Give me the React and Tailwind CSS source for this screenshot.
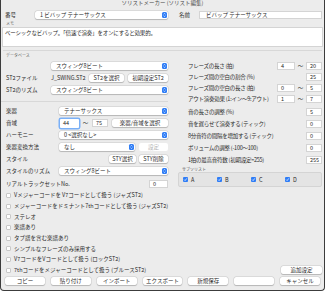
import React from "react";

const Stepper = () => (
  <span className="flex h-[6px] w-[5px] shrink-0 items-center justify-center rounded-[1.5px] bg-[#2f7df6]">
    <svg viewBox="0 0 5 6" className="h-[6px] w-[5px]">
      <path d="M1.5 2.4 L2.5 1.4 L3.5 2.4 M1.5 3.6 L2.5 4.6 L3.5 3.6" stroke="white" strokeWidth="0.6" fill="none" />
    </svg>
  </span>
);

const Popup = ({ text, className = "" }) => (
  <div className={`flex h-[8px] items-center justify-between rounded-[2px] bg-white pl-[5px] pr-[1px] shadow-[0_0_0_0.5px_rgba(0,0,0,0.12),0_0.5px_1px_rgba(0,0,0,0.18)] ${className}`}>
    <span>{text}</span>
    <Stepper />
  </div>
);

const Field = ({ text, className = "" }) => (
  <div className={`flex h-[8px] items-center border-[0.5px] border-[#d4d4d4] bg-white px-[3px] ${className}`}>{text}</div>
);

const Btn = ({ text, className = "" }) => (
  <div className={`flex h-[8px] items-center justify-center rounded-[2px] bg-white shadow-[0_0_0_0.5px_rgba(0,0,0,0.12),0_0.5px_1px_rgba(0,0,0,0.18)] ${className}`}>{text}</div>
);

const Label = ({ text, className = "" }) => <span className={`w-[45px] shrink-0 ${className}`}>{text}</span>;

const Check = ({ text }) => (
  <div className="flex h-[10.7px] items-center gap-[3px] pl-[5px]">
    <span className="h-[5px] w-[5px] rounded-[1px] border-[0.5px] border-[#c8c8c8] bg-white" />
    <span>{text}</span>
  </div>
);

const BlueCheck = ({ text }) => (
  <div className="flex w-[34px] items-center gap-[3px]">
    <span className="flex h-[5px] w-[5px] items-center justify-center rounded-[1px] bg-[#2f7df6]">
      <svg viewBox="0 0 5 5" className="h-[5px] w-[5px]">
        <path d="M1.1 2.6 L2.1 3.6 L3.9 1.3" stroke="white" strokeWidth="0.7" fill="none" />
      </svg>
    </span>
    <span>{text}</span>
  </div>
);

const RightRow = ({ label, a, b }) => (
  <div className="flex h-[8px] items-center">
    <span className="flex-1 whitespace-nowrap tracking-[-0.25px]">{label}</span>
    {b !== undefined ? (
      <>
        <Field text={a} className="w-[18px]" />
        <span className="w-[11px] text-center">〜</span>
      </>
    ) : null}
    <Field text={b !== undefined ? b : a} className="w-[16px]" />
  </div>
);

export default function App() {
  return (
    <div className="flex h-[291px] w-[325px] flex-col overflow-hidden rounded-b-[4px] border-x border-b border-[#3c3c3c] bg-[#ececec] text-[5.5px] leading-[8px] text-[#2a2a2a]" style={{ fontFamily: '"Noto Sans CJK JP", "Noto Sans", sans-serif' }}>
      <div className="h-[10px] text-center leading-[7px] text-[#4a4a4a]">ソリストメーカー (ソリスト編集)</div>

      <div className="flex h-[9px] items-center pr-[2px]">
        <span className="w-[34px] shrink-0 pl-[4px]">番号</span>
        <Popup text="1 ビバップ テナーサックス" className="w-[133px]" />
        <span className="ml-[11px] w-[20px] shrink-0">名前</span>
        <Field text="ビバップ テナーサックス" className="flex-1 pl-[6px]" />
      </div>

      <div className="h-[8px] pl-[5px] pt-[1px] text-[4px] leading-[6px] text-[#555]">メモ</div>
      <div className="mx-[1px] h-[20px] border-[0.5px] border-[#d4d4d4] bg-white pl-[2px] pt-[1px] tracking-[-0.2px]">
        ベーシックなビバップ。「倍速で演奏」をオンにすると効果的。
      </div>

      <div className="mx-[2px] mt-[3px] border-t border-[#d8d8d8]" />
      <div className="h-[9px] pl-[5px] pt-[1px] text-[4px] leading-[6px] text-[#555]">データベース</div>

      <div className="flex">
        <div className="flex w-[167px] shrink-0 flex-col pl-[5px]">
          <div className="flex h-[12px] items-center">
            <Label text="" />
            <Popup text="スウィング8ビート" className="flex-1" />
          </div>
          <div className="flex h-[12px] items-center">
            <Label text="ST2ファイル" />
            <span className="w-[38px]">J_SWING.ST2</span>
            <Btn text="ST2を選択" className="w-[35px]" />
            <Btn text="初期設定ST2" className="ml-[4px] flex-1" />
          </div>
          <div className="flex h-[12px] items-center">
            <Label text="ST2のリズム" />
            <Popup text="スウィング8ビート" className="flex-1" />
          </div>
          <div className="-ml-[5px] mt-[5px] mb-[3px] border-t border-[#d8d8d8]" />
          <div className="flex h-[12px] items-center">
            <Label text="楽器" className="w-[53px]" />
            <Popup text="テナーサックス" className="flex-1" />
          </div>
          <div className="flex h-[12px] items-center">
            <Label text="音域" className="w-[54px]" />
            <div className="flex h-[9px] w-[19px] items-center rounded-[1px] bg-white px-[3px] ring-[1.5px] ring-[#7ab0f7]">44</div>
            <span className="w-[13px] text-center">〜</span>
            <Field text="75" className="w-[16px]" />
            <Btn text="楽器/音域を選択" className="ml-[4px] flex-1" />
          </div>
          <div className="flex h-[12px] items-center">
            <Label text="ハーモニー" className="w-[53px]" />
            <Popup text="0 <選択なし>" className="flex-1" />
          </div>
          <div className="flex h-[12px] items-center">
            <Label text="楽器変換方法" className="w-[53px]" />
            <Popup text="なし" className="w-[76px]" />
            <Btn text="設定" className="ml-[4px] flex-1 bg-[#f4f4f4] text-[#b4b4b4] shadow-none" />
          </div>
          <div className="flex h-[12px] items-center justify-end gap-[3px]">
            <span className="mr-auto">スタイル</span>
            <Btn text="STY選択" className="w-[27px]" />
            <Btn text="STY削除" className="w-[29px]" />
          </div>
          <div className="flex h-[12px] items-center">
            <Label text="スタイルのリズム" className="w-[53px]" />
            <Popup text="スウィング8ビート" className="flex-1" />
          </div>
          <div className="flex h-[13px] items-center">
            <span className="flex-1">リアルトラックセットNo.</span>
            <Field text="0" className="w-[19px]" />
          </div>
        </div>

        <div className="ml-[20px] flex flex-1 flex-col pr-[2px]">
          <div className="flex flex-col gap-[3px] pt-[2px]">
            <RightRow label="フレーズの長さ (拍)" a="4" b="20" />
            <RightRow label="フレーズ間の空白の割合 (%)" a="25" />
            <RightRow label="フレーズ間の空白の長さ (拍)" a="0" b="5" />
            <RightRow label="アウト演奏効果 (1:イン〜9:アウト)" a="1" b="7" />
          </div>
          <div className="mt-[5px] flex flex-col gap-[4px]">
            <RightRow label="音の長さの調整 (%)" a="5" />
            <RightRow label="音を遅らせて演奏する (ティック)" a="0" />
            <RightRow label="8分音符の間隔を増加する (ティック)" a="0" />
            <RightRow label="ボリュームの調整 (-100〜100)" a="0" />
            <RightRow label="1拍の最高音符数 (初期設定=255)" a="255" />
          </div>
          <div className="-ml-[10px] mt-[2px] h-[6px] pl-[4px] text-[4px] leading-[6px] text-[#555]">サブソリスト</div>
          <div className="-ml-[10px] flex h-[15px] items-center rounded-[2px] border-[0.5px] border-[#d4d4d4] bg-[#e4e4e4] pl-[4px]">
            <BlueCheck text="A" />
            <BlueCheck text="B" />
            <BlueCheck text="C" />
            <BlueCheck text="D" />
          </div>
        </div>
      </div>

      <div className="flex flex-col">
        <Check text="Vメジャーコードを V7コードとして扱う (ジャズST2)" />
        <Check text="メジャーコードをドミナント7thコードとして扱う (ジャズST2)" />
        <Check text="ステレオ" />
        <Check text="楽譜あり" />
        <Check text="タブ譜を含む楽譜あり" />
        <Check text="シンプルなフレーズのみ採用する" />
        <Check text="V7コードをVコードとして扱う (ロックST2)" />
        <div className="flex items-center justify-between pr-[2px]">
          <Check text="7thコードをメジャーコードとして扱う (ブルースST2)" />
          <Btn text="追加設定" className="w-[41px]" />
        </div>
      </div>

      <div className="mt-[1px] flex gap-[6px] px-[4px]">
        <Btn text="コピー" className="flex-1" />
        <Btn text="貼り付け" className="flex-1" />
        <Btn text="インポート" className="flex-1" />
        <Btn text="エクスポート" className="flex-1" />
        <Btn text="新規保存" className="flex-1" />
        <Btn text="OK" className="flex-1 bg-[#2f7df6] text-white" />
        <Btn text="キャンセル" className="flex-1" />
      </div>
    </div>
  );
}
